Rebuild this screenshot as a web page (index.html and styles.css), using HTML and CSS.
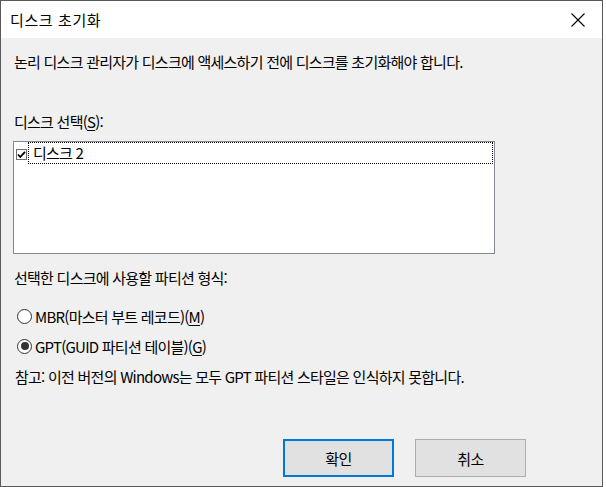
FILE: index.html
```html
<!DOCTYPE html>
<html lang="ko">
<head>
    <meta charset="UTF-8">
    <title>디스크 초기화</title>
    <link rel="stylesheet" href="styles.css">
</head>
<body>
<div class="dialog">
    <div class="titlebar">
        <span class="title">디스크 초기화</span>
        <svg class="close" width="16" height="16" viewBox="0 0 16 16">
            <path d="M1.5 1.5 L14.5 14.5 M14.5 1.5 L1.5 14.5" stroke="#000" stroke-width="1.1" fill="none"/>
        </svg>
    </div>

    <div class="content">
        <p class="intro">논리 디스크 관리자가 디스크에 액세스하기 전에 디스크를 초기화해야 합니다.</p>

        <p class="label">디스크 선택(<u>S</u>):</p>
        <div class="listbox">
            <div class="item">
                <span class="checkbox">
                    <svg width="9" height="9" viewBox="0 0 9 9">
                        <path d="M1 4.5 L3.3 7 L8 1.8" stroke="#000" stroke-width="1.8" fill="none"/>
                    </svg>
                </span>
                <span class="item-text">디스크 2</span>
            </div>
        </div>

        <p class="label format">선택한 디스크에 사용할 파티션 형식:</p>
        <div class="radio first">
            <span class="circle"></span>
            <span>MBR(마스터 부트 레코드)(<u>M</u>)</span>
        </div>
        <div class="radio">
            <span class="circle checked"></span>
            <span>GPT(GUID 파티션 테이블)(<u>G</u>)</span>
        </div>

        <p class="note">참고: 이전 버전의 Windows는 모두 GPT 파티션 스타일은 인식하지 못합니다.</p>

        <div class="buttons">
            <button class="btn default">확인</button>
            <button class="btn">취소</button>
        </div>
    </div>
</div>
</body>
</html>
```

FILE: styles.css
```css
body {
    margin: 0;
    padding: 0;
    background-color: #fff;
    font-family: "Noto Sans CJK KR", "Noto Sans", sans-serif;
    font-size: 15px;
    letter-spacing: -0.75px;
    color: #000;
}

.dialog {
    width: 603px;
    height: 487px;
    box-sizing: border-box;
    border: 1px solid #595959;
    background-color: #f0f0f0;
}

.titlebar {
    height: 37px;
    background-color: #fff;
    display: flex;
    align-items: center;
    justify-content: space-between;
    padding: 0 16px 0 9px;
}

.title {
    letter-spacing: 0.6px;
}

.content {
    padding: 14px 0 0 13px;
}

p {
    margin: 0;
    line-height: 20px;
}

.label {
    margin-top: 40px;
}

.label.format {
    margin-top: 14px;
}

u {
    text-decoration-thickness: 1px;
    text-underline-offset: 2px;
}

.listbox {
    width: 482px;
    height: 113px;
    box-sizing: border-box;
    margin-top: 9px;
    margin-left: -1px;
    border: 1px solid #828790;
    background-color: #fff;
}

.item {
    display: flex;
    align-items: center;
    height: 22px;
    padding-left: 2px;
}

.checkbox {
    width: 11px;
    height: 11px;
    box-sizing: border-box;
    border: 1px solid #707070;
    display: flex;
    align-items: center;
    justify-content: center;
    margin-right: 1px;
    margin-top: 2px;
}

.item-text {
    flex: 1;
    height: 20px;
    line-height: 20px;
    border: 1px dotted #000;
    padding-left: 4px;
    margin-right: 1px;
}

.radio {
    display: flex;
    align-items: center;
    height: 20px;
    margin-top: 10px;
    padding-left: 3px;
}

.radio.first {
    margin-top: 18px;
}

.circle {
    width: 15px;
    height: 15px;
    box-sizing: border-box;
    border: 1px solid #333;
    border-radius: 50%;
    background-color: #fff;
    margin-right: 3px;
    display: flex;
    align-items: center;
    justify-content: center;
}

.circle.checked::after {
    content: "";
    width: 8px;
    height: 8px;
    border-radius: 50%;
    background-color: #333;
}

.note {
    margin-top: 11px;
    padding-left: 1px;
}

.buttons {
    display: flex;
    gap: 21px;
    margin-top: 52px;
    padding-left: 269px;
}

.btn {
    font-family: inherit;
    font-size: 15px;
    letter-spacing: -0.6px;
    color: #000;
    width: 111px;
    height: 38px;
    box-sizing: border-box;
    background-color: #e1e1e1;
    border: 1px solid #adadad;
    padding: 0;
}

.btn.default {
    border: 2px solid #0078d7;
}
```
